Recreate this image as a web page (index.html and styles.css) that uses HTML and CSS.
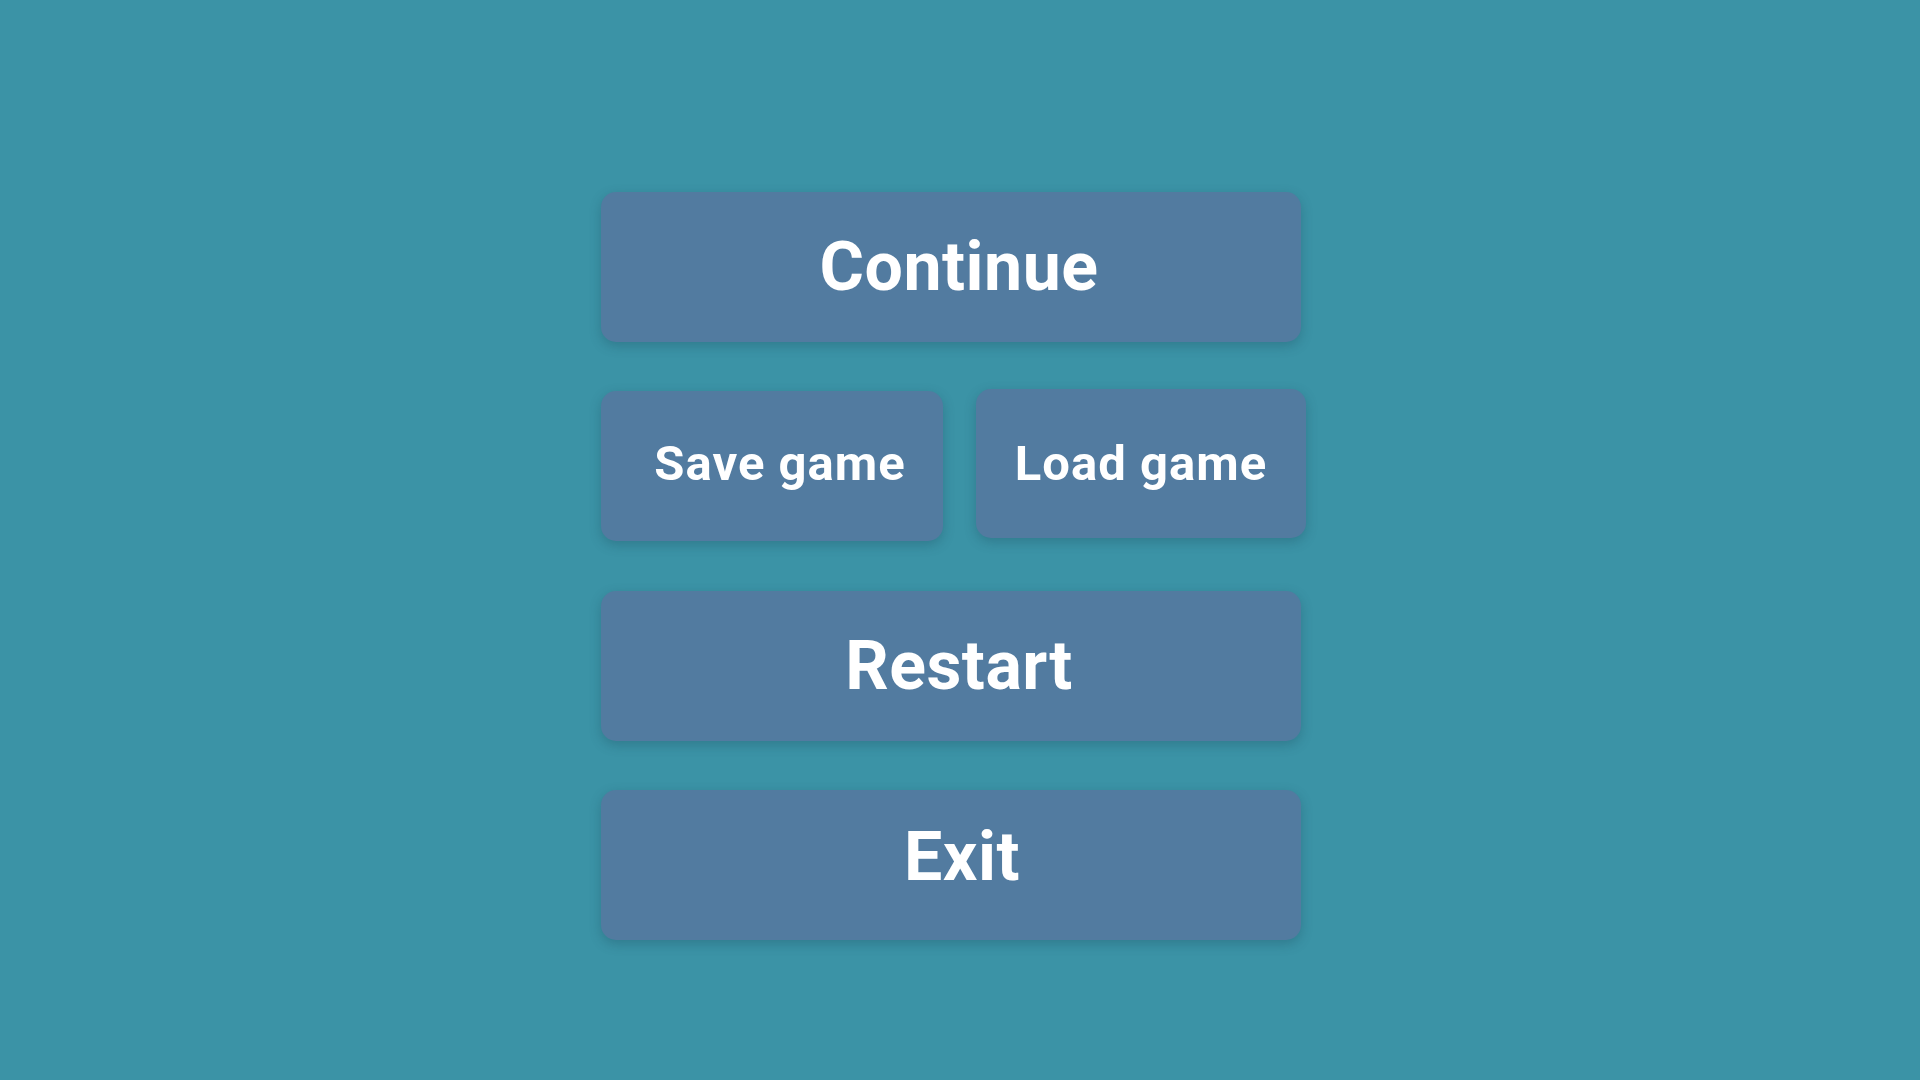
FILE: index.html
```html
<!DOCTYPE html>
<html>
<head>
<meta charset="utf-8">
<link rel="stylesheet" href="styles.css">
</head>
<body>
<div class="menu">
  <div class="btn btn-big btn-continue">Continue</div>
  <div class="row">
    <div class="btn btn-small btn-save">Save game</div>
    <div class="btn btn-small btn-load">Load game</div>
  </div>
  <div class="btn btn-big btn-restart">Restart</div>
  <div class="btn btn-big btn-exit">Exit</div>
</div>
</body>
</html>
```
FILE: styles.css
```css
html, body {
  margin: 0;
  padding: 0;
}
body {
  width: 1920px;
  height: 1080px;
  background: #3b93a6;
  font-family: Roboto, "Liberation Sans", sans-serif;
  overflow: hidden;
}
.menu {
  display: flex;
  flex-direction: column;
  width: 700px;
  margin-left: 601px;
  padding-top: 192px;
}
.btn {
  box-sizing: border-box;
  flex-shrink: 0;
  height: 150px;
  display: flex;
  align-items: center;
  justify-content: center;
  background: #527ba0;
  color: #ffffff;
  border-radius: 15px;
  box-shadow: 0 4px 12px rgba(20, 60, 80, 0.28);
  font-weight: 700;
}
.btn-big {
  width: 700px;
  font-size: 68px;
  letter-spacing: 0.5px;
  padding-left: 16px;
}
.row {
  display: flex;
  align-items: flex-start;
  gap: 33px;
  margin-top: 47px;
}
.btn-small {
  font-size: 49px;
  letter-spacing: 1px;
}
.btn-save {
  width: 342px;
  margin-top: 2px;
  padding-left: 16px;
  padding-bottom: 6px;
}
.btn-load {
  width: 330px;
  height: 149px;
}
.btn-restart {
  margin-top: 50px;
}
.btn-exit {
  margin-top: 49px;
  padding-left: 22px;
  padding-bottom: 16px;
}
```
